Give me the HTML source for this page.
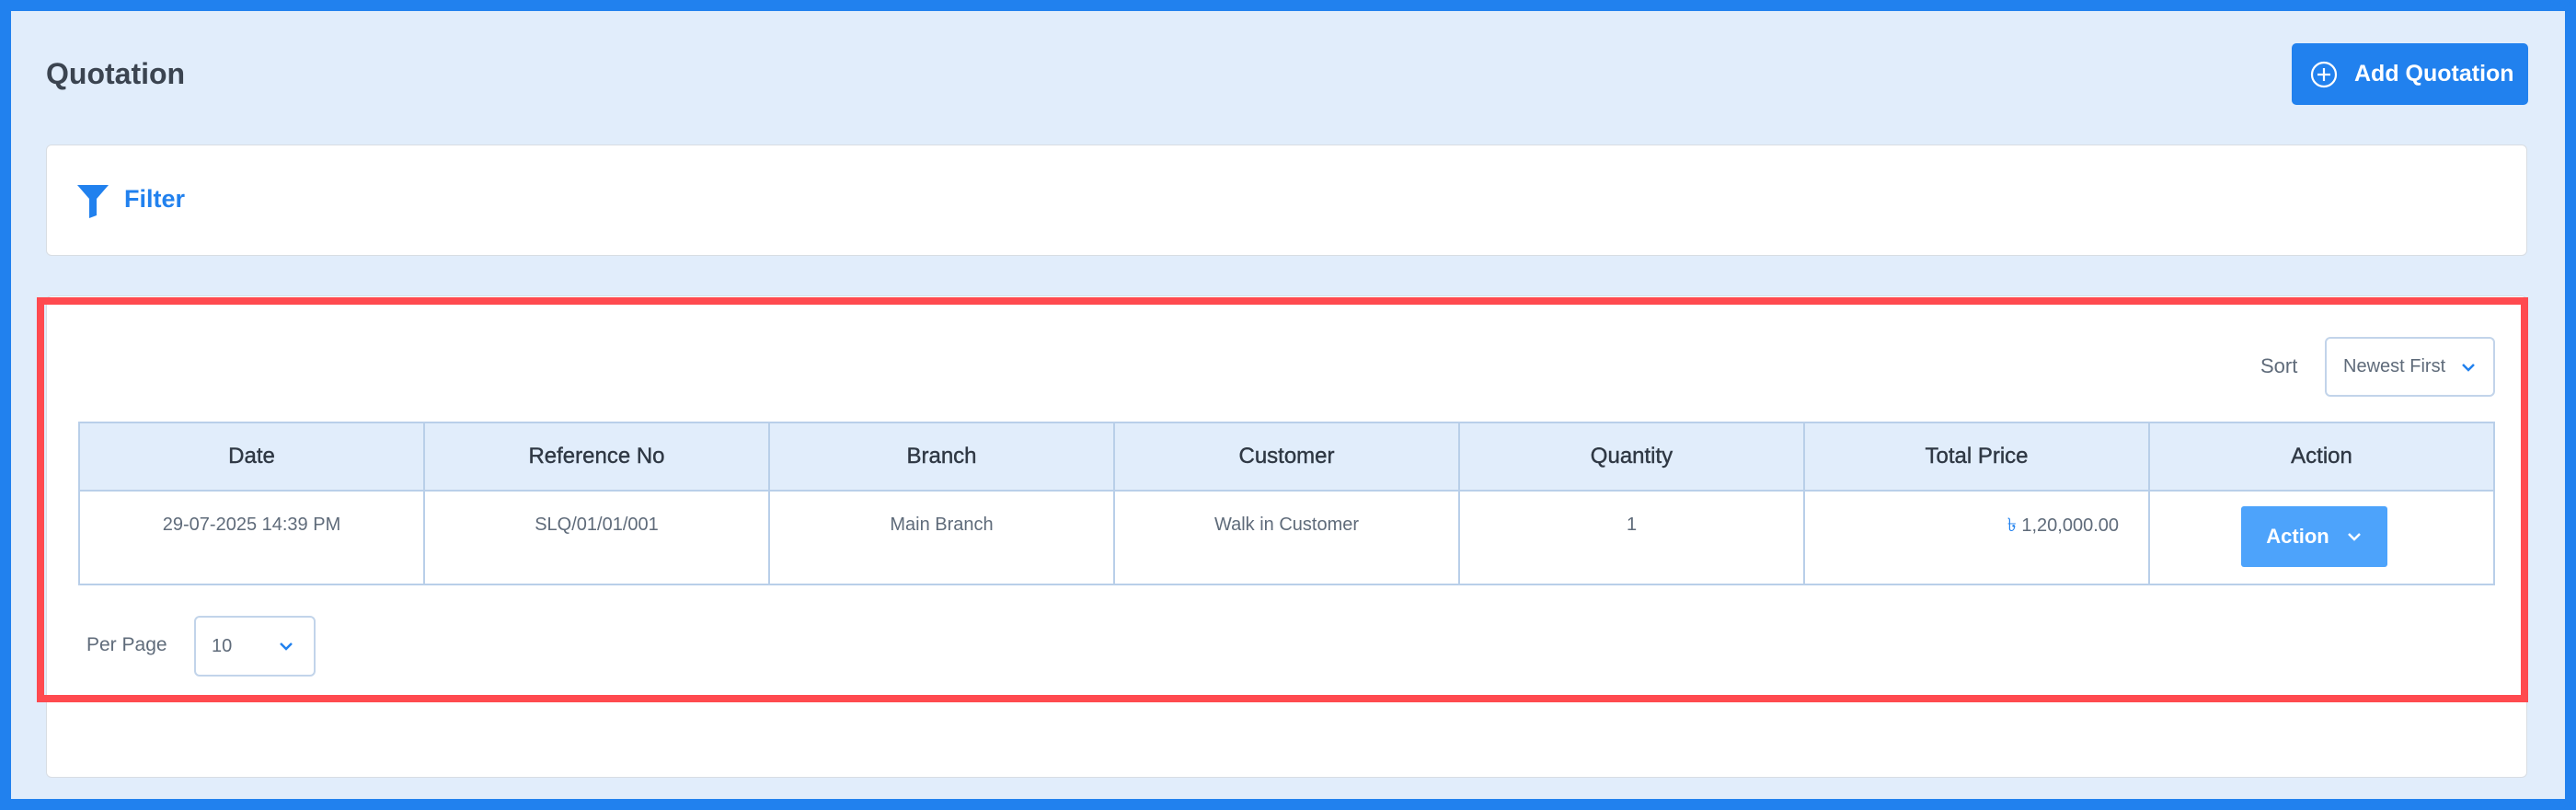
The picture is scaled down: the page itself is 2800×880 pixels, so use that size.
<!DOCTYPE html>
<html><head><meta charset="utf-8"><style>
*{box-sizing:border-box;margin:0;padding:0}
body{width:2800px;height:880px;background:#2181ee;font-family:"Liberation Sans",sans-serif;position:relative;overflow:hidden}
.in{position:absolute;left:12px;top:12px;right:12px;bottom:12px;background:#e1edfb}
.a{position:absolute}
h1{position:absolute;left:50px;top:62px;font-size:32px;font-weight:bold;color:#3b4450}
.btn{left:2491px;top:47px;width:257px;height:67px;background:#2181ee;border-radius:5px;color:#fff;font-weight:bold;font-size:25px;display:flex;align-items:center;padding-left:20px}
.card{background:#fff;border:1px solid #d8dde3;border-radius:6px}
table{position:absolute;left:85px;top:458px;width:2627px;border-collapse:collapse;table-layout:fixed}
th,td{border:2px solid #b9cfe9;text-align:center}
th{background:#e1edfb;height:74px;font-size:24px;font-weight:normal;color:#2f3844;-webkit-text-stroke:0.4px #2f3844}
td{height:102px;font-size:20px;color:#5f6b7a;vertical-align:top;padding-top:25px}
.sel{border:2px solid #c2d4ea;border-radius:6px;background:#fff;color:#5f6b7a;font-size:20px;display:flex;align-items:center}
</style></head><body>
<div class="in"></div>
<h1>Quotation</h1>
<div class="a btn"><svg width="30" height="30" viewBox="0 0 30 30" style="margin-right:18px"><circle cx="15" cy="15" r="13" fill="none" stroke="#fff" stroke-width="2.2"/><path d="M15 8v14M8 15h14" stroke="#fff" stroke-width="2.2"/></svg>Add Quotation</div>
<div class="a card" style="left:50px;top:157px;width:2697px;height:121px"></div>
<svg class="a" style="left:84px;top:201px" width="34" height="36" viewBox="0 0 34 36"><path d="M0 0H34L21 15V33L13 36V15Z" fill="#2181ee"/></svg>
<div class="a" style="left:135px;top:201px;font-size:27px;font-weight:bold;color:#2181ee">Filter</div>
<div class="a card" style="left:50px;top:321px;width:2697px;height:524px"></div>
<div class="a" style="left:40px;top:323px;width:2708px;height:440px;border:8px solid #ff4a4f"></div>
<div class="a" style="left:2457px;top:385px;font-size:22px;color:#5f6b7a">Sort</div>
<div class="a sel" style="left:2527px;top:366px;width:185px;height:65px;padding-left:18px">Newest First<svg width="18" height="12" viewBox="0 0 18 12" style="margin-left:16px"><path d="M3 3l6 6 6-6" fill="none" stroke="#2181ee" stroke-width="2.5"/></svg></div>
<table><tr><th>Date</th><th>Reference No</th><th>Branch</th><th>Customer</th><th>Quantity</th><th>Total Price</th><th>Action</th></tr>
<tr><td>29-07-2025 14:39 PM</td><td>SLQ/01/01/001</td><td>Main Branch</td><td>Walk in Customer</td><td>1</td><td style="text-align:right;padding-right:32px;padding-top:22px"><span style="color:#2181ee">৳</span> 1,20,000.00</td><td style="padding-top:16px;padding-right:16px"><div style="display:inline-flex;align-items:center;justify-content:center;width:159px;height:66px;background:#4da3fb;border-radius:3px;color:#fff;font-weight:bold;font-size:22px">Action<svg width="18" height="12" viewBox="0 0 18 12" style="margin-left:18px"><path d="M3 3l6 6 6-6" fill="none" stroke="#fff" stroke-width="2.5"/></svg></div></td></tr></table>
<div class="a" style="left:94px;top:689px;font-size:21px;color:#5f6b7a">Per Page</div>
<div class="a sel" style="left:211px;top:669px;width:132px;height:66px;padding-left:17px">10<svg width="18" height="12" viewBox="0 0 18 12" style="margin-left:50px"><path d="M3 3l6 6 6-6" fill="none" stroke="#2181ee" stroke-width="2.5"/></svg></div>
</body></html>
